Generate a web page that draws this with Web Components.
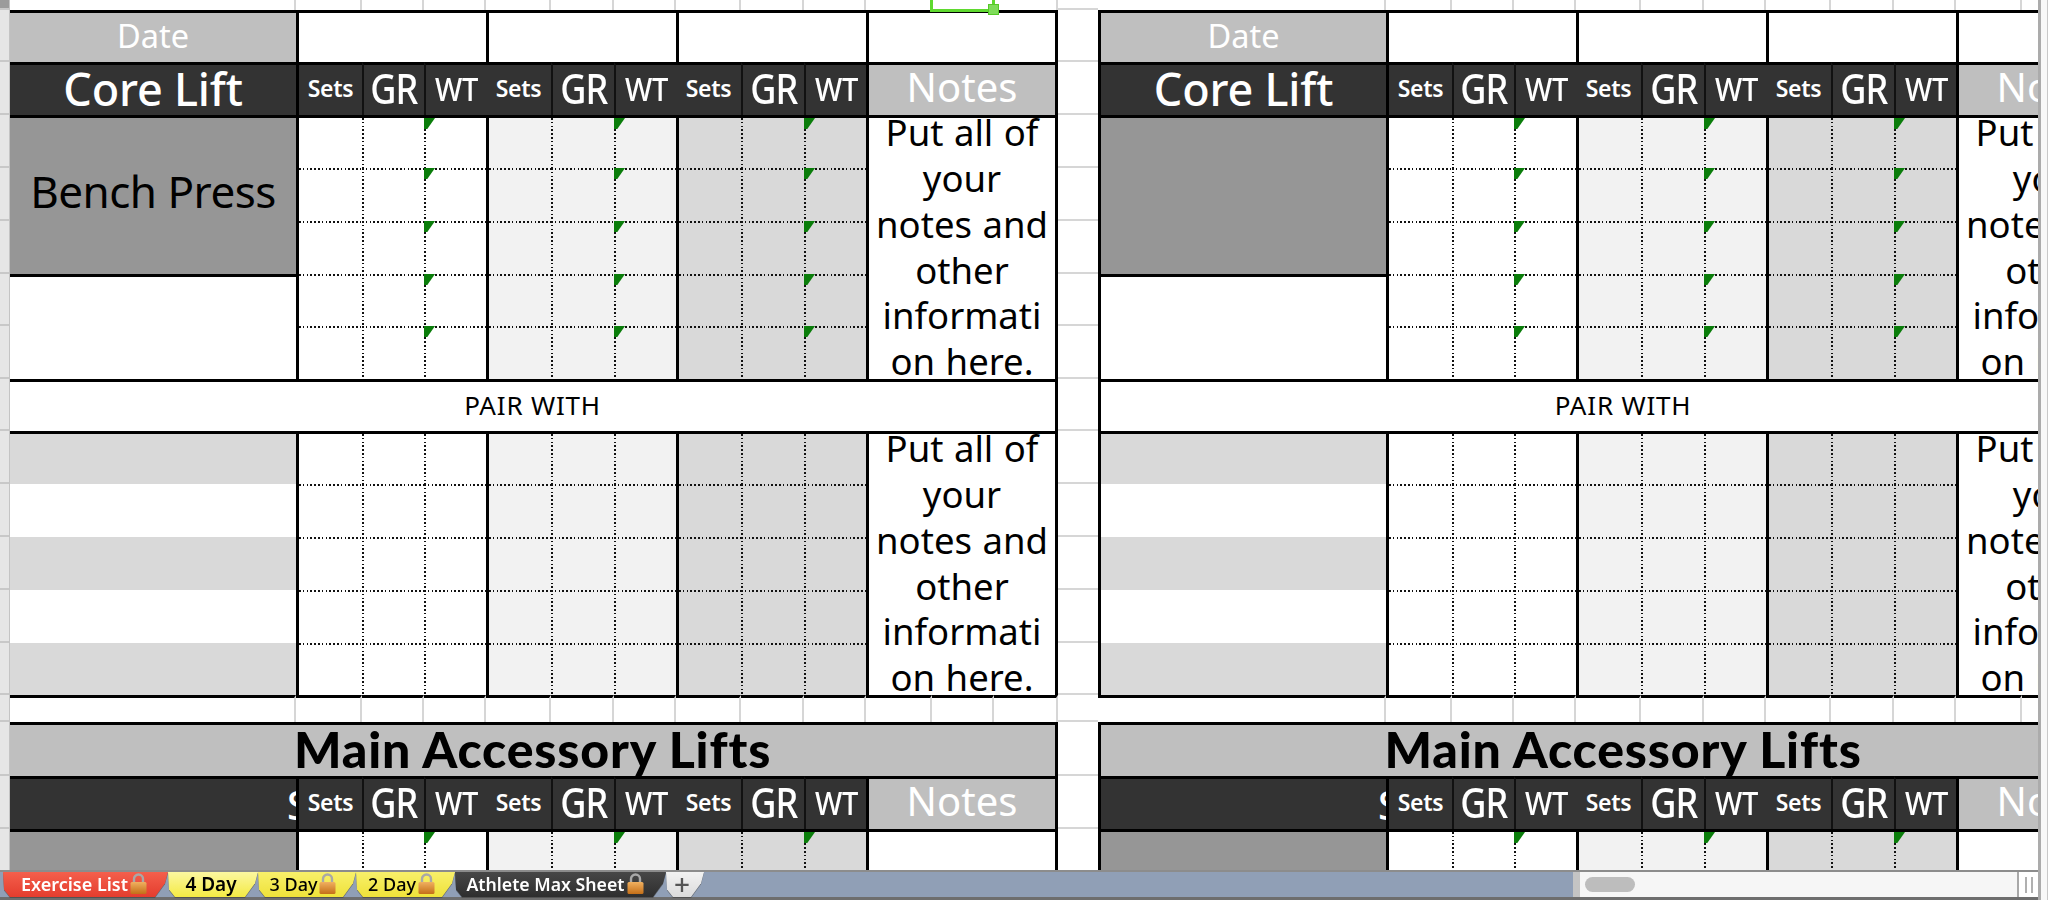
<!DOCTYPE html>
<html><head><meta charset="utf-8"><title>Workout sheet</title>
<style>html,body{margin:0;padding:0;width:2048px;height:900px;overflow:hidden;background:#fff}</style>
</head><body>
<x-app>
  <x-sheet>
    <x-block>
      <span slot="lift">Bench Press</span>
      <span slot="notes1">Put all of<br>your<br>notes and<br>other<br>informati<br>on here.</span>
      <span slot="notes2">Put all of<br>your<br>notes and<br>other<br>informati<br>on here.</span>
      <span slot="lift2">Bench Press</span>
    </x-block>
    <x-gap></x-gap>
    <x-block edge>
      <span slot="notes1">Put all of<br>your<br>notes and<br>other<br>informati<br>on here.</span>
      <span slot="notes2">Put all of<br>your<br>notes and<br>other<br>informati<br>on here.</span>
    </x-block>
  </x-sheet>
  <x-tabbar>
    <x-tab tone="red" width="165" locked>Exercise List</x-tab>
    <x-tab tone="active" width="90">4 Day</x-tab>
    <x-tab tone="yellow" width="98" locked>3 Day</x-tab>
    <x-tab tone="yellow" width="99" locked>2 Day</x-tab>
    <x-tab tone="dark" width="211" locked>Athlete Max Sheet</x-tab>
    <x-tab tone="add" width="38">+</x-tab>
  </x-tabbar>
</x-app>
<script>
const ROWS=[10,52,53,53,53,53,52,53,52,53,53,53,53,52,27,54,53,53,53,53];
const rowTpl=ROWS.map(h=>h+'px').join(' ');
const SANS='"Noto Sans","Open Sans",sans-serif';

class XApp extends HTMLElement{constructor(){super();this.attachShadow({mode:'open'}).innerHTML=`
<style>:host{display:flex;width:2048px;height:900px;overflow:hidden;background:#fff;font-family:${SANS}}
.main{display:flex;flex-direction:column;flex:1;min-width:0}
.vs{width:10px;box-sizing:border-box;border-left:3px solid #ababab;border-right:1px solid #c8c8c8;background:#f8f8f8}
</style>
<div class="main"><slot></slot></div><div class="vs"></div>`}}
customElements.define('x-app',XApp);

class XSheet extends HTMLElement{constructor(){super();
const g=ROWS.map(()=>'<i></i>').join('');
this.attachShadow({mode:'open'}).innerHTML=`
<style>:host{display:flex;height:870px;flex:none;overflow:hidden;position:relative;background:#fff}
.gut{flex:none;width:10px;display:grid;grid-template-rows:${rowTpl};background:#e6e6e6;box-sizing:border-box;border-right:1px solid #c4c4c4}
.gut i{display:block;border-bottom:2px solid #c8c8c8;box-sizing:border-box}
.gut i:first-child{background:#9b9b9b}
.blocks{display:flex;flex:none}
.sel{position:absolute;left:930px;top:-3px;width:65px;height:15px;box-sizing:border-box;border:3px solid #5fd92f}
.sel b{position:absolute;right:-7px;bottom:-6px;width:9px;height:9px;background:#7fdc5a;border:1px solid #55c828}
</style>
<div class="gut">${g}</div><div class="blocks"><slot></slot></div><div class="sel"><b></b></div>`}}
customElements.define('x-sheet',XSheet);

class XGap extends HTMLElement{constructor(){super();
this.attachShadow({mode:'open'}).innerHTML=`
<style>:host{display:grid;flex:none;width:40px;grid-template-rows:${rowTpl}}
i{display:block;box-sizing:border-box;border-bottom:2px solid #d6d6d6}</style>${ROWS.map(()=>'<i></i>').join('')}`}}
customElements.define('x-gap',XGap);

class XBlock extends HTMLElement{constructor(){super();
const edge=this.hasAttribute('edge');
const subs=[2,3,4,5,6,7,8,9,10];
let h='';
const cell=(cls,col,cs,row,rs,inner='')=>{h+=`<div class="${cls}" style="grid-column:${col}/span ${cs};grid-row:${row}/span ${rs}">${inner}</div>`;};
const lab=edge?' edge':'';
for(const r of [1,15]){
  const k='grid'+(r===15?' top':'');
  cell(k,1,1,r,1);
  for(const c of subs) cell(k,c,1,r,1);
  for(const c of [11,12,13]) cell(k,c,1,r,1);
}
cell('lab lt t date'+lab,1,1,2,1,'Date');
for(const c of [2,5,8]) cell('wh t l',c,3,2,1);
cell('wh t l r',11,3,2,1);
const header=(r,first)=>{
  cell('dark t'+lab,1,1,r,1,first);
  for(const c of subs){
    const k=(c-2)%3;
    const t=k===0?'<span class="sets">Sets</span>':k===1?'<span class="gr">GR</span>':'<span class="wt">WT</span>';
    cell('dark t'+(c===2?' l':'')+(k!==0?' thin':''),c,1,r,1,t);
  }
  cell('lt t l r notehead',11,3,r,1,'Notes');
};
const data=(r0,n,marks)=>{
  for(let i=0;i<n;i++){
    for(const c of subs){
      const k=(c-2)%3, g=Math.floor((c-2)/3);
      let cls='cell g'+g+(i===0?' t':' dt')+(k===0?' l':' dl');
      cell(cls,c,1,r0+i,1,(marks&&k===2)?'<em></em>':'');
    }
  }
};
header(3,'<span class="core">Core Lift</span>');
cell('gray t'+lab+' lift',1,1,4,3,'<slot name="lift"></slot>');
cell('wh t'+lab,1,1,7,2);
data(4,5,true);
cell('wh t l r notes',11,3,4,5,'<div><slot name="notes1"></slot></div>');
cell('wh t r pair'+lab,1,13,9,1,'PAIR WITH');
for(let i=0;i<5;i++) cell((i%2?'wh':'stripe')+(i===0?' t':'')+lab,1,1,10+i,1);
data(10,5,false);
cell('wh t l r notes',11,3,10,5,'<div><slot name="notes2"></slot></div>');
cell('lt t r main'+lab,1,13,16,1,'Main Accessory Lifts');
header(17,'<span class="cut">Sets</span>');
cell('gray t'+lab+' lift',1,1,18,3,'<slot name="lift2"></slot>');
data(18,3,true);
cell('wh t l r',11,3,18,3);
this.attachShadow({mode:'open'}).innerHTML=`
<style>
:host{display:grid;flex:none;grid-template-columns:${edge?288:286}px 66px 62px 62px 65px 63px 62px 65px 63px 62px 66px 62px 64px;grid-template-rows:${rowTpl};font-family:${SANS};color:#000}
div{box-sizing:border-box;position:relative;display:flex;align-items:center;justify-content:center;overflow:hidden;white-space:nowrap;min-width:0}
.grid{border-right:2px solid #d6d6d6;background-color:#fff}
.grid.top{border-top:3px solid #000}
.t{border-top:3px solid #000}
.l{border-left:3px solid #000}
.r{border-right:3px solid #000}
.edge{border-left:3px solid #000}
.cell{background-repeat:no-repeat;background-position:0 0,0 0;background-size:100% 2px,2px 100%;background-image:var(--dh,none),var(--dv,none)}
.dt{--dh:repeating-linear-gradient(90deg,#111 0 1.6px,transparent 1.6px 3.8px)}
.dl{--dv:repeating-linear-gradient(180deg,#111 0 1.6px,transparent 1.6px 3.8px)}
.wh{background-color:#fff}.lt{background-color:#bfbfbf;color:#fff}.dark{background-color:#333;color:#fff;padding-bottom:4px}
.gray{background-color:#969696}.stripe{background-color:#d9d9d9}
.g0{background-color:#fff}.g1{background-color:#f2f2f2}.g2{background-color:#d9d9d9}
.thin{border-left:2px solid #111}
.date{font-size:32.5px;padding-bottom:5px}
.notehead{font-size:40px;padding-bottom:7px}
.core{font-size:45px;letter-spacing:-.2px;font-weight:500}
.lift{font-size:44px;letter-spacing:-.5px;padding-bottom:10px}
.sets{font-size:23px;font-weight:600;letter-spacing:-.3px}
.gr{font-size:41px;display:inline-block;transform:scaleX(.88);letter-spacing:-1px;font-weight:500}
.wt{font-size:33px;display:inline-block;transform:scaleX(.88);letter-spacing:-.4px;font-weight:500}
.notes>div{position:static;display:block;overflow:visible;text-align:center;font-size:36.5px;line-height:45.8px;white-space:nowrap;word-spacing:1px}
.notes{padding-bottom:2px}
.pair{font-size:26px;letter-spacing:.8px;padding-bottom:3px}
.main{font-family:Lato,${SANS};font-weight:900;font-size:50px;letter-spacing:.85px;color:#000;padding-bottom:3px}
.cut{font-size:40px;font-weight:500;position:absolute;left:277px;top:-2px}
em{position:absolute;left:0;top:0;width:11px;height:11px;background:#0a7d0a;clip-path:polygon(0 0,100% 0,62% 55%,30% 100%,0 100%)}
</style>${h}`}}
customElements.define('x-block',XBlock);

class XTabbar extends HTMLElement{constructor(){super();
this.attachShadow({mode:'open'}).innerHTML=`
<style>:host{display:flex;height:30px;flex:none;box-sizing:border-box;border-top:2px solid #8c8c8c;border-bottom:3px solid #6e6e6e;background:#909fb6}
.tabs{display:flex;width:1573px;flex:none;padding-left:3px;box-sizing:border-box}
.split{width:7px;flex:none;background:#c4c4c4}
.track{flex:1;background:#f6f6f6;display:flex;align-items:center;padding-left:5px}
.thumb{width:50px;height:15px;border-radius:8px;background:#bdbdbd}
.grab{width:21px;flex:none;background:#fff;border-left:2px solid #a8a8a8;box-sizing:border-box;display:flex;align-items:center;justify-content:center;gap:4px}
.grab i{display:block;width:2px;height:16px;background:#b0b0b0}
</style>
<div class="tabs"><slot></slot></div><div class="split"></div><div class="track"><div class="thumb"></div></div><div class="grab"><i></i><i></i></div>`}}
customElements.define('x-tabbar',XTabbar);

class XTab extends HTMLElement{constructor(){super();
const tone=this.getAttribute('tone'),w=this.getAttribute('width'),lock=this.hasAttribute('locked');
const tones={red:['#f45f4c','#e43d2e','#fff',6],active:['#fbf7a0','#f4ea44','#000',8],yellow:['#f8f06a','#efe23a','#000',11],dark:['#474747','#2e2e2e','#fff',14],add:['#f2f2f2','#dcdcdc','#555',10]}[tone];
const fs=tone==='add'?'28px':tone==='active'?'19px':tone==='dark'?'17.7px':'18px';
const wt=(tone==='red'||tone==='dark'||tone==='active')?600:500;
this.attachShadow({mode:'open'}).innerHTML=`
<style>:host{display:block;flex:none;width:${w}px;height:25px;filter:drop-shadow(0 1px 0 rgba(60,60,60,.55))}
.t{height:100%;display:flex;align-items:center;justify-content:center;gap:1px;padding:0 ${tones[3]}px 2px 4px;box-sizing:border-box;background:linear-gradient(${tones[0]},${tones[1]});color:${tones[2]};font:${wt} ${fs} ${SANS};clip-path:polygon(0 0,100% 0,calc(100% - 3px) 45%,calc(100% - 13px) 100%,7px 100%,1px 70%);white-space:nowrap}
svg{flex:none;margin-top:-1px}</style>
<div class="t"><slot></slot>${lock?`<svg width="19" height="23" viewBox="0 0 18 23"><defs><linearGradient id="o" x1="0" y1="0" x2="0" y2="1"><stop offset="0" stop-color="#f0b060"/><stop offset="1" stop-color="#c46f18"/></linearGradient></defs><path d="M4.5 11V7a4.5 4.5 0 0 1 9 0v4" fill="none" stroke="#a8a8a8" stroke-width="2.4"/><rect x="1" y="10" width="16" height="12" rx="1.5" fill="url(#o)"/></svg>`:''}</div>`}}
customElements.define('x-tab',XTab);
</script>
</body></html>
